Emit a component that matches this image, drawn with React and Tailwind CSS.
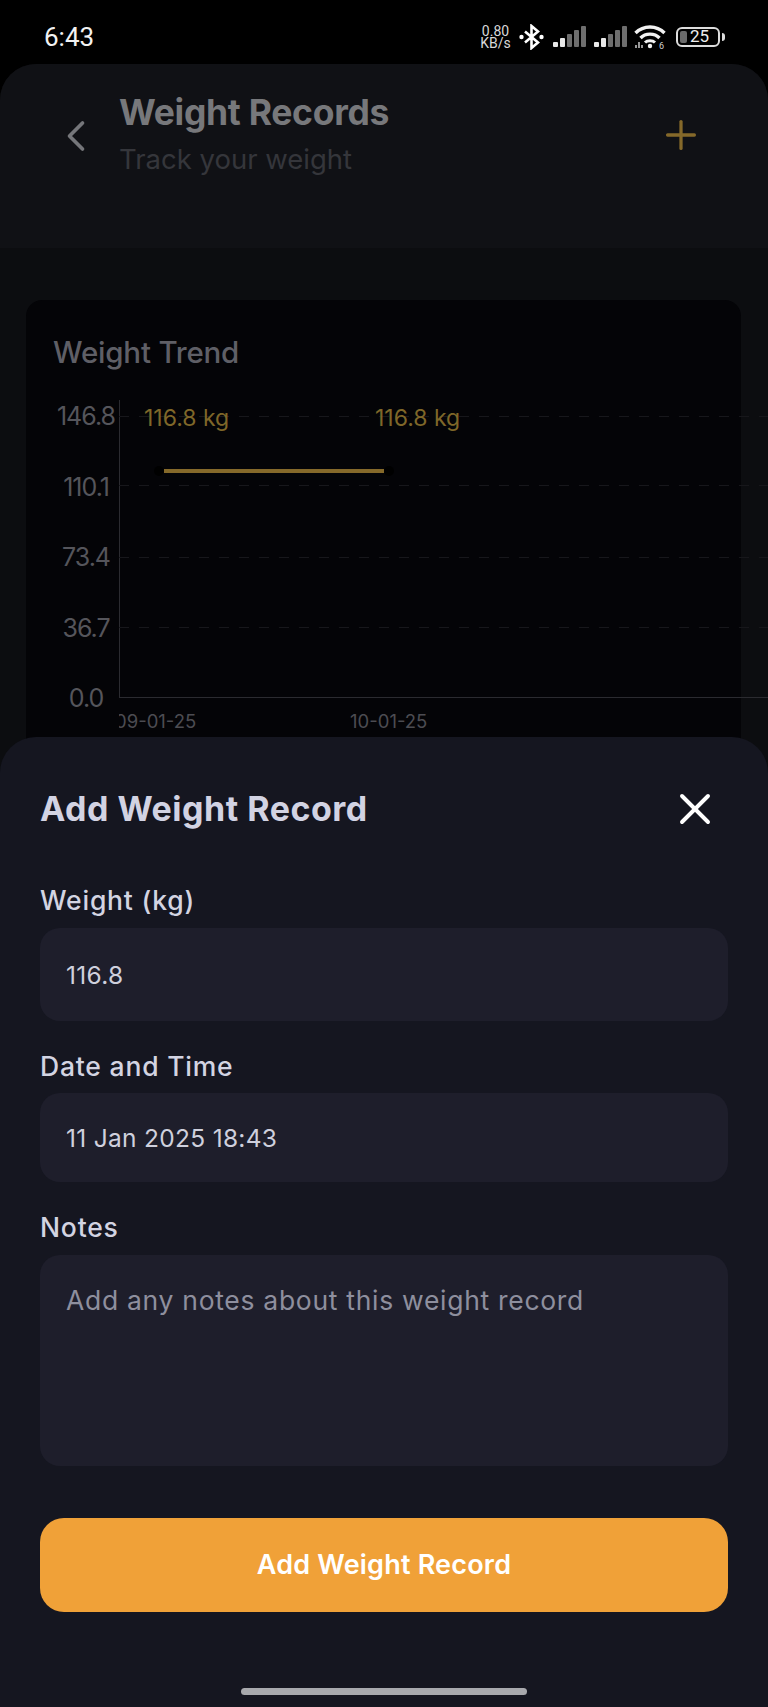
import { ChevronLeft, Plus, X } from "lucide-react";

const heading = { fontFamily: '"Inter", "Noto Sans", sans-serif' };

function SignalBars() {
  return (
    <svg width="33" height="21" viewBox="0 0 33 21">
      <rect x="0" y="16" width="5" height="5" rx="1" fill="#e8e8e8" />
      <rect x="7" y="12" width="5" height="9" rx="1" fill="#e8e8e8" />
      <rect x="14" y="8" width="5" height="13" rx="1" fill="#6e6e6e" />
      <rect x="21" y="4" width="5" height="17" rx="1" fill="#6e6e6e" />
      <rect x="28" y="0" width="5" height="21" rx="1" fill="#6e6e6e" />
    </svg>
  );
}

function BluetoothIcon() {
  return (
    <svg width="25" height="26" viewBox="0 0 25 26" fill="none">
      <path d="M6 7.5l13 11-6.5 5.5V2l6.5 5.5-13 11" stroke="#fff" strokeWidth="2.6" />
      <circle cx="2.5" cy="13" r="2.2" fill="#fff" />
      <circle cx="22.5" cy="13" r="2.2" fill="#fff" />
    </svg>
  );
}

function Wifi() {
  return (
    <svg width="32" height="26" viewBox="0 0 32 26" fill="none">
      <path d="M1.5 9C9.5 1 22.5 1 30.5 9" stroke="#f2f2f2" strokeWidth="3.4" />
      <path d="M6.5 14C11.5 8.8 20.5 8.8 25.5 14" stroke="#f2f2f2" strokeWidth="3.4" />
      <path d="M11 18.5C13.5 16 18.5 16 21 18.5" stroke="#f2f2f2" strokeWidth="3" />
      <circle cx="16" cy="22" r="2.2" fill="#f2f2f2" />
      <path d="M2 24v-3M5 24v-6M8 24v-3" stroke="#bdbdbd" strokeWidth="1.6" />
      <text x="25" y="24.5" fontSize="9" fill="#d0d0d0" fontFamily="Roboto, sans-serif">6</text>
    </svg>
  );
}

function StatusBar() {
  return (
    <div className="h-16 shrink-0 flex items-center justify-between pt-[9px] pl-11 pr-[43px] text-white font-['Roboto',sans-serif]">
      <span className="text-[26px] leading-none text-[#f2f2f2]">6:43</span>
      <div className="flex items-center">
        <div className="w-[31px] flex flex-col items-center text-[#d8d8d8] text-[14px] leading-[12px]">
          <span>0.80</span>
          <span>KB/s</span>
        </div>
        <div className="ml-[8px]"><BluetoothIcon /></div>
        <div className="ml-[9px]"><SignalBars /></div>
        <div className="ml-[8px]"><SignalBars /></div>
        <div className="ml-[7px]"><Wifi /></div>
        <div className="ml-[10px] w-[44px] h-[20px] rounded-[6px] border-2 border-[#dcdcdc] flex items-center pl-[2px]">
          <div className="w-[7px] h-[12px] rounded-[2px] bg-[#6a6a6a]" />
          <span className="ml-[3px] text-[17px] leading-none text-[#eeeeee]">25</span>
        </div>
        <div className="ml-[2px] w-[3px] h-[8px] rounded-r-sm bg-[#dcdcdc]" />
      </div>
    </div>
  );
}

function Chart() {
  const yLabels = ["146.8", "110.1", "73.4", "36.7", "0.0"];
  return (
    <div style={heading} className="h-[500px] rounded-t-[16px] bg-[#040407] pl-[27px] pt-[36px]">
      <h2 className="text-[29.5px] leading-[32px] font-medium text-[#5f5f66] tracking-[-0.2px]">
        Weight Trend
      </h2>
      <div className="flex mt-[32px]">
        <div className="w-[66px] shrink-0 flex flex-col text-[25px] leading-[70px] text-[#55555b] tracking-[-1px] -mt-[19px]">
          {yLabels.map((label) => (
            <span key={label} className="h-[70.5px] w-[66px] text-center">{label}</span>
          ))}
        </div>
        <div className="w-[649px] shrink-0">
          <svg width="649" height="298" viewBox="0 0 649 298" className="block overflow-visible">
            <line x1="0.5" y1="0" x2="0.5" y2="297" stroke="#2b2b30" />
            <line x1="0" y1="297.5" x2="649" y2="297.5" stroke="#2b2b30" />
            {[16, 85, 157, 227].map((y) => (
              <line key={y} x1="0" y1={y + 0.5} x2="649" y2={y + 0.5} stroke="#17171b" strokeDasharray="10 10" />
            ))}
            <line x1="45" y1="71" x2="265" y2="71" stroke="#85692a" strokeWidth="4" />
            <circle cx="40" cy="71" r="5" fill="#000" />
            <circle cx="270" cy="71" r="5" fill="#000" />
            <text x="25" y="26" fontSize="23" fill="#7f6729" fontFamily="Inter, sans-serif">116.8 kg</text>
            <text x="256" y="26" fontSize="23" fill="#7f6729" fontFamily="Inter, sans-serif">116.8 kg</text>
          </svg>
          <div className="flex text-[18.5px] leading-[24px] mt-[11px] text-[#4c4c52]">
            <div className="w-[231px] overflow-hidden">
              <span className="block -ml-[4px]">09-01-25</span>
            </div>
            <span>10-01-25</span>
          </div>
        </div>
      </div>
    </div>
  );
}

function Field({ label, value, heightClass, labelGap, placeholder }) {
  return (
    <div>
      <label className={`block text-[26.5px] leading-[32px] tracking-[0.8px] font-medium text-[#d3d4e2] ${labelGap}`}>{label}</label>
      {placeholder ? (
        <div className={`${heightClass} rounded-[20px] bg-[#1e1e2b] px-[26px] pt-[28px] text-[26.5px] leading-[34px] tracking-[0.7px] text-[#8e8f9e]`}>
          {value}
        </div>
      ) : (
        <div className={`${heightClass} rounded-[20px] bg-[#1e1e2b] px-[26px] flex items-center text-[24.5px] leading-[34px] tracking-[0.3px] text-[#cfd0dd]`}>
          {value}
        </div>
      )}
    </div>
  );
}

export default function App() {
  return (
    <div className="relative w-[768px] h-[1707px] overflow-hidden bg-black flex flex-col">
      <StatusBar />

      <div className="flex-1 rounded-t-[36px] bg-[#0c0d10] overflow-hidden">
        {/* Header */}
        <div style={heading} className="h-[184px] bg-[#101115] flex items-start pt-[30px] pl-[50px] pr-[64px]">
          <ChevronLeft className="w-[52px] h-[52px] mt-[16px] text-[#75767a]" strokeWidth={1.7} />
          <div className="ml-[17px] flex-1">
            <h1 className="text-[35.5px] leading-[38px] font-bold tracking-[-0.3px] text-[#77787b]">Weight Records</h1>
            <p className="mt-[9px] text-[27.5px] leading-[36px] text-[#35363b]">Track your weight</p>
          </div>
          <Plus className="w-[46px] h-[46px] mt-[18px] text-[#85692a]" strokeWidth={1.7} />
        </div>

        <div className="pl-[26px] pr-[27px] pt-[52px]">
          <Chart />
        </div>
      </div>

      {/* Bottom sheet */}
      <div style={heading} className="absolute inset-x-0 bottom-0 h-[970px] rounded-t-[36px] bg-[#151620] px-[40px] flex flex-col">
        <div className="flex items-center justify-between mt-[50px] h-[44px]">
          <h2 className="text-[34px] leading-[44px] font-bold tracking-[0.5px] text-[#d2d3e3]">Add Weight Record</h2>
          <X className="w-[52px] h-[52px] mr-[7px] text-white" strokeWidth={1.8} />
        </div>

        <div className="mt-[53px]">
          <Field label="Weight (kg)" value="116.8" heightClass="h-[93px]" labelGap="mb-[12px]" />
        </div>
        <div className="mt-[29px]">
          <Field label="Date and Time" value="11 Jan 2025 18:43" heightClass="h-[89px]" labelGap="mb-[11px]" />
        </div>
        <div className="mt-[29px]">
          <Field label="Notes" value="Add any notes about this weight record" heightClass="h-[211px]" labelGap="mb-[12px]" placeholder />
        </div>

        <button className="mt-[52px] h-[94px] rounded-[24px] bg-[#f0a138] text-white text-[27px] tracking-[0.2px] font-semibold">
          Add Weight Record
        </button>

        <div className="mt-[76px] mx-auto w-[286px] h-[7px] rounded-full bg-[#a8a9ad]" />
      </div>
    </div>
  );
}
